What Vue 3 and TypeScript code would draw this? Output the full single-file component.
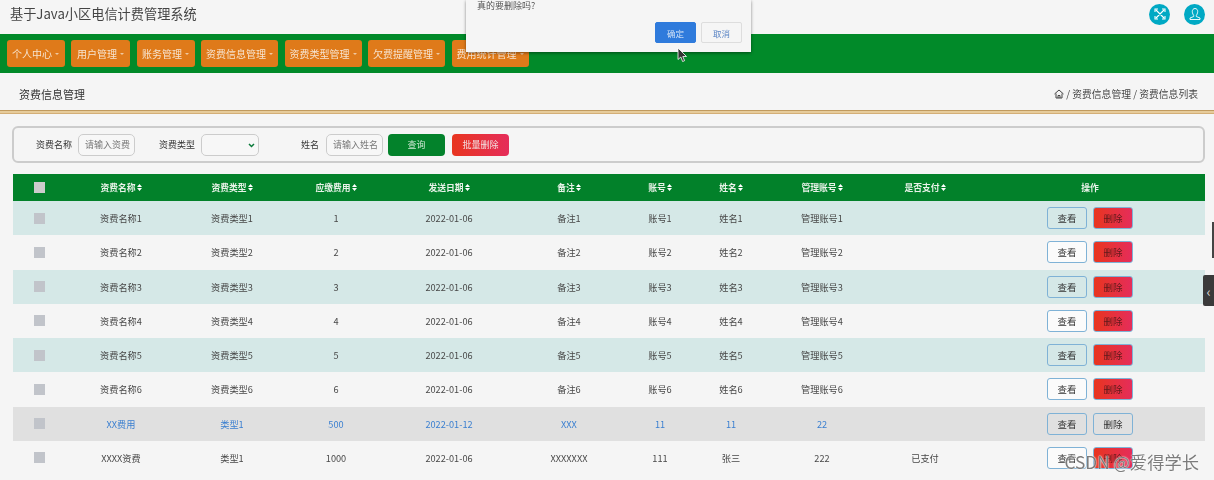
<script setup lang="ts">
interface Row { vals: string[]; kind: string; plainDelete?: boolean }
const menus: { label: string; w: number }[] = [
  { label: '个人中心', w: 58 }, { label: '用户管理', w: 59 }, { label: '账务管理', w: 58 },
  { label: '资费信息管理', w: 77 }, { label: '资费类型管理', w: 77 }, { label: '欠费提醒管理', w: 77 }, { label: '费用统计管理', w: 77 }
]
const heads: string[] = ['资费名称', '资费类型', '应缴费用', '发送日期', '备注', '账号', '姓名', '管理账号', '是否支付']
const rows: Row[] = [1, 2, 3, 4, 5, 6].map((n) => ({
  vals: [`资费名称${n}`, `资费类型${n}`, `${n}`, '2022-01-06', `备注${n}`, `账号${n}`, `姓名${n}`, `管理账号${n}`, ''],
  kind: n % 2 ? 'odd' : 'even'
}))
rows.push({ vals: ['XX费用', '类型1', '500', '2022-01-12', 'XXX', '11', '11', '22', ''], kind: 'hover', plainDelete: true })
rows.push({ vals: ['XXXX资费', '类型1', '1000', '2022-01-06', 'XXXXXXX', '111', '张三', '222', '已支付'], kind: 'even' })
</script>

<template>
  <div class="page">
    <div class="soft">
      <header class="top">
        <div class="title">基于Java小区电信计费管理系统</div>
        <div class="top-icons">
          <span class="circle">
            <svg width="14" height="14" viewBox="0 0 14 14" fill="none" stroke="#fff" stroke-width="1.1">
              <path d="M3 3l8 8M11 3l-8 8M2 5V2h3M9 2h3v3M12 9v3H9M5 12H2V9" />
            </svg>
          </span>
          <span class="circle">
            <svg width="14" height="14" viewBox="0 0 14 14" fill="none" stroke="#fff" stroke-width="0.9">
              <path d="M7 1.500c-1.700 0-2.700 1.300-2.700 3S5.300 8 5.700 8.500v1L2 11v1.500h10V11L8.300 9.500v-1C8.700 8 9.700 6.200 9.700 4.500S8.700 1.500 7 1.500z" />
            </svg>
          </span>
        </div>
      </header>

      <nav class="nav">
        <div v-for="m in menus" :key="m.label" class="menu" :style="{ width: m.w + 'px' }">
          {{ m.label }}<i class="caret"></i>
        </div>
      </nav>

      <section class="crumbs">
        <div class="crumb-title">资费信息管理</div>
        <div class="crumb-path">
          <svg width="10" height="10" viewBox="0 0 10 10" fill="none" stroke="#444" stroke-width="1">
            <path d="M0.500 5L5 1l4.500 4M2 4.500V9h6V4.500M4 9V6.500h2V9" />
          </svg>
          <span>/ 资费信息管理 / 资费信息列表</span>
        </div>
      </section>
      <div class="gold"></div>

      <form class="search" @submit.prevent>
        <label class="lbl first">资费名称</label>
        <input class="ipt" placeholder="请输入资费" />
        <label class="lbl second">资费类型</label>
        <span class="select-wrap">
          <select class="sel"></select>
          <svg class="chev" width="7" height="5" viewBox="0 0 7 5" fill="none" stroke="#0a7a3a" stroke-width="1.5">
            <path d="M1 1l2.500 2.500L6 1" />
          </svg>
        </span>
        <label class="lbl third">姓名</label>
        <input class="ipt" placeholder="请输入姓名" />
        <button class="act go" type="button">查询</button>
        <button class="act del-all" type="button">批量删除</button>
      </form>

      <div class="table">
        <div class="tr head">
          <div class="td"><span class="check hcheck"></span></div>
          <div v-for="h in heads" :key="h" class="td">
            {{ h }}<svg class="sort" width="5" height="7" viewBox="0 0 5 7" fill="#fff"><path d="M2.500 0L5 3H0zM2.500 7L0 4h5z" /></svg>
          </div>
          <div class="td op-cell">操作</div>
        </div>
        <div v-for="(r, i) in rows" :key="i" class="tr row" :class="r.kind">
          <div class="td"><span class="check"></span></div>
          <div v-for="(v, j) in r.vals" :key="j" class="td">{{ v }}</div>
          <div class="td op-cell ops">
            <button class="mini" type="button">查看</button>
            <button class="mini" :class="{ danger: !r.plainDelete }" type="button">删除</button>
          </div>
        </div>
      </div>

      <div class="dialog">
        <div class="dlg-text">真的要删除吗?</div>
        <div class="dlg-btns">
          <button class="dlg-btn ok" type="button">确定</button>
          <button class="dlg-btn no" type="button">取消</button>
        </div>
      </div>

      <svg class="cursor" width="11" height="16" viewBox="0 0 11 16">
        <path d="M1 1v11.500l2.800-2.500 1.800 4.500 2-.8L5.800 9.500H9.500z" fill="#333" stroke="#fff" stroke-width="0.8" />
      </svg>
      <div class="side-tab"><span>‹</span></div>
      <div class="side-bar"></div>
    </div>
    <div class="mark">CSDN @爱得学长</div>
  </div>
</template>

<style>
html, body { margin: 0; background: #f5f5f5; }
</style>

<style scoped>
.page {
  position: relative;
  width: 1214px;
  height: 480px;
  overflow: hidden;
  background: #f5f5f5;
  font-family: "Noto Sans CJK SC", "Noto Sans", sans-serif;
  color: #333;
}
.soft { filter: blur(0.45px); height: 480px; position: relative; }
.top {
  height: 33px;
  display: flex;
  align-items: center;
  justify-content: space-between;
  padding: 0 9px 5px 10px;
  box-sizing: border-box;
}
.title { font-size: 13.200px; color: #444; line-height: 1; }
.top-icons { display: flex; gap: 14px; margin-top: 0; }
.circle {
  width: 21px; height: 21px; border-radius: 50%;
  background: #00a9c4;
  display: flex; align-items: center; justify-content: center;
}
.nav {
  height: 39px;
  margin-top: 1px;
  background: #018a29;
  display: flex;
  gap: 6.500px;
  padding: 6px 0 0 6.500px;
  box-sizing: border-box;
}
.menu {
  height: 27px;
  background: #df7a1a;
  border-radius: 3px;
  color: #f6e4d0;
  font-size: 10px;
  display: flex;
  align-items: center;
  justify-content: center;
  gap: 3px;
}
.caret {
  width: 0; height: 0;
  border-left: 2px solid transparent;
  border-right: 2px solid transparent;
  border-top: 2px solid #f0c8a0;
}
.crumbs {
  height: 37px;
  display: flex;
  align-items: center;
  justify-content: space-between;
  padding: 4px 16px 0 19px;
  box-sizing: border-box;
}
.crumb-title { font-size: 11px; color: #333; }
.crumb-path { font-size: 9.800px; color: #444; display: flex; align-items: center; gap: 2px; }
.gold {
  height: 4px;
  background: #e6cb9a;
  border-top: 1px solid #c09a5e;
  border-bottom: 1px solid #d3ae76;
  box-sizing: border-box;
}
.search {
  margin: 12px 9px 0 12px;
  height: 37px;
  box-sizing: border-box;
  border: 2px solid #ccc;
  border-radius: 6px;
  display: flex;
  align-items: center;
  font-size: 9px;
}
.lbl { color: #333; margin-right: 6px; white-space: nowrap; }
.first { margin-left: 22px; }
.second { margin-left: 24px; }
.third { margin-left: 42px; margin-right: 7px; }
.ipt {
  width: 57px; height: 22px;
  box-sizing: border-box;
  border: 1px solid #ccc;
  border-radius: 5px;
  background: #f7f7f7;
  padding: 0 0 0 6px;
  font: 9px "Noto Sans CJK SC", sans-serif;
  outline: none;
}
.ipt::placeholder { color: #777; }
.select-wrap { position: relative; display: flex; }
.sel {
  width: 58px; height: 22px;
  box-sizing: border-box;
  appearance: none;
  border: 1px solid #ccc;
  border-radius: 5px;
  background: #f7f7f7;
}
.chev { position: absolute; right: 4px; top: 9px; }
.act {
  width: 57px; height: 22px;
  border: none;
  border-radius: 4px;
  font: 9px "Noto Sans CJK SC", sans-serif;
  color: #f2e0e0;
  padding: 0;
}
.go { margin-left: 5px; background: #03822b; color: #cfe8d4; }
.del-all { margin-left: 7px; background: linear-gradient(90deg, #e8351f, #e52d5a); }
.table { margin: 11px 9px 0 13px; }
.tr {
  display: grid;
  grid-template-columns: 52px 112px 110px 98px 128px 112px 70px 72px 110px 96px 1fr;
  align-items: center;
}
.head { height: 27px; background: #02812a; color: #e8f2e8; font-size: 8.800px; font-weight: 700; }
.row { height: 34.250px; font-size: 9.200px; color: #484848; }
.odd { background: #d5e8e7; }
.even { background: #f5f5f5; }
.hover { background: #e0e0e0; color: #3a7fd0; }
.td { text-align: center; white-space: nowrap; display: flex; justify-content: center; align-items: center; }
.op-cell { padding-left: 2px; }
.sort { margin-left: 1px; }
.check { width: 11px; height: 11px; background: #c1c4ca; display: block; }
.hcheck { background: #ccc; }
.ops { gap: 6px; }
.mini {
  width: 40px; height: 22px;
  box-sizing: border-box;
  border: 1.700px solid #7fb2d6;
  border-radius: 3px;
  background: transparent;
  color: #333;
  font: 9.500px "Noto Sans CJK SC", sans-serif;
  padding: 0;
}
.even .mini { background: #fbfbfb; }
.even .mini.danger, .mini.danger { background: linear-gradient(90deg, #e8351f, #e52d5a); color: #5e1a1a; }
.dialog {
  position: absolute;
  left: 466px; top: 0;
  width: 285px; height: 52px;
  box-sizing: border-box;
  background: #f5f5f5;
  box-shadow: 0 1px 3px rgba(0, 0, 0, 0.45);
  padding: 1px 9px 0 11px;
}
.dlg-text { font-size: 9px; color: #555; line-height: 10px; }
.dlg-btns { display: flex; justify-content: flex-end; gap: 5px; margin-top: 11px; }
.dlg-btn {
  width: 41px; height: 21px;
  border-radius: 2px;
  font: 8.500px "Noto Sans CJK SC", sans-serif;
  padding: 0;
  box-sizing: border-box;
}
.ok { background: #2f7bdc; border: 1px solid #2f7bdc; color: #cfe0f5; }
.no { background: #f5f5f5; border: 1px solid #ddd; color: #5b85c5; }
.cursor { position: absolute; left: 677px; top: 47px; }
.side-tab {
  position: absolute;
  left: 1203px; top: 275px;
  width: 11px; height: 31px;
  background: #3a3a3a;
  border-radius: 2px 0 0 2px;
  color: #ddd;
  font-size: 14px;
  display: flex; align-items: center; justify-content: center;
}
.side-bar {
  position: absolute;
  left: 1212px; top: 222px;
  width: 2px; height: 36px;
  background: #444;
}
.mark {
  position: absolute;
  right: 15px; top: 450px;
  font-size: 17.300px;
  line-height: 24px;
  color: rgba(110, 110, 110, 0.9);
  text-shadow: 0 0 2px #fff, 0 0 1px #fff;
  white-space: nowrap;
}
</style>
